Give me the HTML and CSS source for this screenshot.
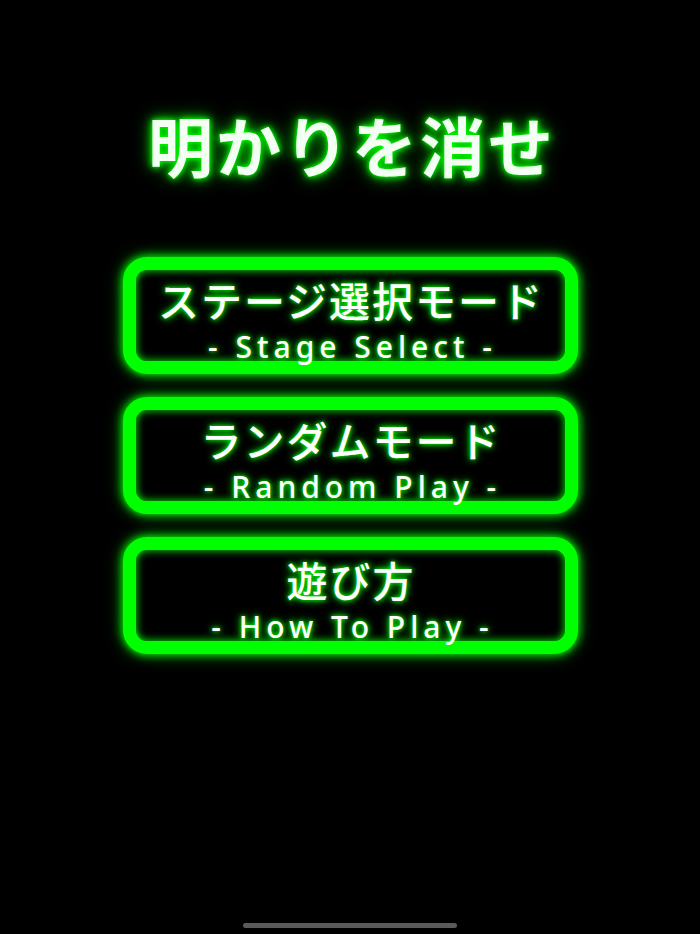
FILE: index.html
```html
<!DOCTYPE html>
<html lang="ja">
<head>
    <meta charset="UTF-8">
    <meta name="viewport" content="width=device-width, initial-scale=1.0">
    <title>明かりを消せ</title>
    <link rel="stylesheet" href="styles.css">
</head>
<body>
    <div class="screen">
        <h1 class="title">明かりを消せ</h1>
        <div class="menu">
            <button class="menu-btn" type="button">
                <span class="menu-label">ステージ選択モード</span>
                <span class="menu-sub">- Stage Select -</span>
            </button>
            <button class="menu-btn" type="button">
                <span class="menu-label">ランダムモード</span>
                <span class="menu-sub">- Random Play -</span>
            </button>
            <button class="menu-btn" type="button">
                <span class="menu-label">遊び方</span>
                <span class="menu-sub">- How To Play -</span>
            </button>
        </div>
        <div class="home-bar"></div>
    </div>
</body>
</html>
```
FILE: styles.css
```css
body {
    margin: 0;
    padding: 0;
    background-color: #000;
    font-family: "Noto Sans CJK JP", "Noto Sans", sans-serif;
    color: #fff;
}

.screen {
    position: relative;
    width: 700px;
    height: 934px;
    display: flex;
    flex-direction: column;
    align-items: center;
    overflow: hidden;
}

.title {
    margin: 99px 0 0 4px;
    font-size: 65px;
    font-weight: bold;
    line-height: 90px;
    letter-spacing: 3px;
    color: #f2fff2;
    text-shadow: 0 0 4px #0f0, 0 0 10px #0f0, 0 0 18px #0c0;
}

.menu {
    margin-top: 68px;
    display: flex;
    flex-direction: column;
    gap: 23px;
}

.menu-btn {
    width: 455px;
    height: 117px;
    box-sizing: border-box;
    border: 13px solid #0f0;
    border-radius: 24px;
    background: #000;
    box-shadow: 0 0 8px #0f0, 0 0 16px #0a0, inset 0 0 8px #0f0;
    display: flex;
    flex-direction: column;
    align-items: center;
    justify-content: flex-start;
    padding: 5px 0 0;
    font-family: inherit;
    color: #fff;
    cursor: pointer;
}

.menu-label {
    margin-left: 2px;
    font-size: 41px;
    font-weight: 500;
    line-height: 48px;
    letter-spacing: 2px;
    text-shadow: 0 0 4px #0f0, 0 0 9px #0f0;
}

.menu-sub {
    margin-top: 7px;
    margin-left: 5px;
    font-family: "Noto Sans", sans-serif;
    font-size: 30px;
    font-weight: 500;
    line-height: 34px;
    letter-spacing: 5px;
    text-shadow: 0 0 4px #0f0, 0 0 9px #0f0;
}

/* iOS style home indicator, drawn over the bottom edge */
.home-bar {
    position: absolute;
    left: 243px;
    bottom: 6px;
    width: 214px;
    height: 5px;
    border-radius: 3px;
    background-color: #5a5a5a;
}
```
